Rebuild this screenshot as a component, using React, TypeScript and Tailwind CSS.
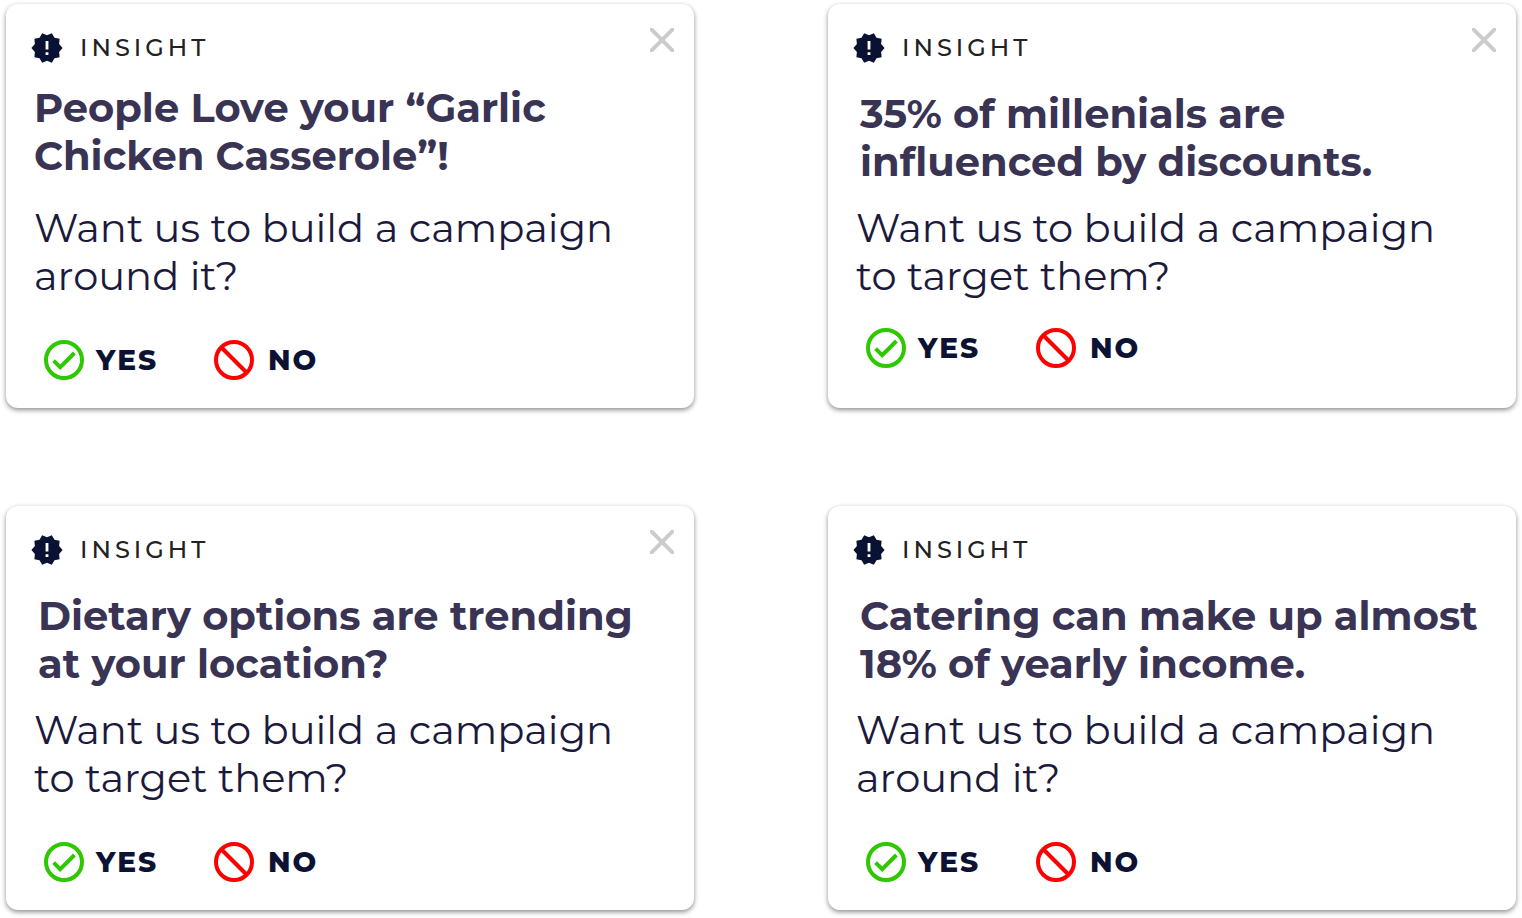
import React from "react";
import { MdNewReleases } from "react-icons/md";
import { clsx } from "clsx";

type Insight = {
  title: string[];
  question: string[];
  dismissible?: boolean;
  // spacing differs a little from card to card
  titleClass: string;
  questionClass: string;
  actionsClass: string;
};

const insights: Insight[] = [
  {
    title: ["People Love your “Garlic", "Chicken Casserole”!"],
    question: ["Want us to build a campaign", "around it?"],
    dismissible: true,
    titleClass: "mt-5",
    questionClass: "mt-6",
    actionsClass: "mt-10",
  },
  {
    title: ["35% of millenials are", "influenced by discounts."],
    question: ["Want us to build a campaign", "to target them?"],
    dismissible: true,
    titleClass: "mt-[26px] pl-1",
    questionClass: "mt-[18px]",
    actionsClass: "mt-7",
  },
  {
    title: ["Dietary options are trending", "at your location?"],
    question: ["Want us to build a campaign", "to target them?"],
    dismissible: true,
    titleClass: "mt-[26px] pl-1",
    questionClass: "mt-[18px]",
    actionsClass: "mt-10",
  },
  {
    title: ["Catering can make up almost", "18% of yearly income."],
    question: ["Want us to build a campaign", "around it?"],
    titleClass: "mt-[26px] pl-1",
    questionClass: "mt-[18px]",
    actionsClass: "mt-10",
  },
];

const CloseIcon = () => (
  <svg viewBox="0 0 24 24" className="h-6 w-6" stroke="#cccccc" strokeWidth="4" aria-hidden="true">
    <path d="M-2 -2L26 26M26 -2L-2 26" />
  </svg>
);

const YesIcon = () => (
  <svg viewBox="0 0 40 40" className="h-10 w-10" fill="none" stroke="#2dc800" aria-hidden="true">
    <circle cx="20" cy="20" r="18" strokeWidth="4" />
    <path d="M9.6 20.6L16.2 27.2L30.4 13" strokeWidth="3.9" />
  </svg>
);

const NoIcon = () => (
  <svg viewBox="0 0 40 40" className="h-10 w-10" fill="none" stroke="#ff0000" aria-hidden="true">
    <circle cx="20" cy="20" r="18" strokeWidth="4" />
    <path d="M7.5 7.5L32.5 32.5" strokeWidth="4" />
  </svg>
);

const Lines = ({ lines }: { lines: string[] }) => (
  <>
    {lines.map((line) => (
      <span key={line} className="block whitespace-nowrap">
        {line}
      </span>
    ))}
  </>
);

const InsightCard = ({ insight }: { insight: Insight }) => (
  <article className="min-h-[404px] rounded-xl bg-white pt-6 pr-5 pb-7 pl-7 shadow-[0_2px_5px_rgba(0,0,0,0.45)]">
    <header className="-ml-1 flex h-9 items-start justify-between">
      <div className="flex items-center gap-4 pt-[3px]">
        <MdNewReleases className="h-[34px] w-[34px] text-[#0a1233]" />
        <span className="text-2xl leading-8 font-medium tracking-[4px] text-[#222222]">INSIGHT</span>
      </div>
      {insight.dismissible && (
        <button type="button" aria-label="Dismiss insight" className="cursor-pointer">
          <CloseIcon />
        </button>
      )}
    </header>
    <h2 className={clsx("text-[40px] leading-12 font-bold text-[#3a3454]", insight.titleClass)}>
      <Lines lines={insight.title} />
    </h2>
    <p className={clsx("text-[40px] leading-12 font-normal text-[#1c1a3c]", insight.questionClass)}>
      <Lines lines={insight.question} />
    </p>
    <div className={clsx("flex pl-2.5 text-[28px] leading-10 font-extrabold tracking-[2px] text-[#0c1233]", insight.actionsClass)}>
      <button type="button" className="flex w-[170px] cursor-pointer items-center gap-3">
        <YesIcon />
        YES
      </button>
      <button type="button" className="flex cursor-pointer items-center gap-3.5">
        <NoIcon />
        NO
      </button>
    </div>
  </article>
);

export default function App() {
  return (
    <main className="grid grid-cols-2 gap-x-[134px] gap-y-[98px] bg-white px-1.5 pt-1 pb-2 font-[Montserrat,Inter,sans-serif]">
      {insights.map((insight) => (
        <InsightCard key={insight.title[0]} insight={insight} />
      ))}
    </main>
  );
}
